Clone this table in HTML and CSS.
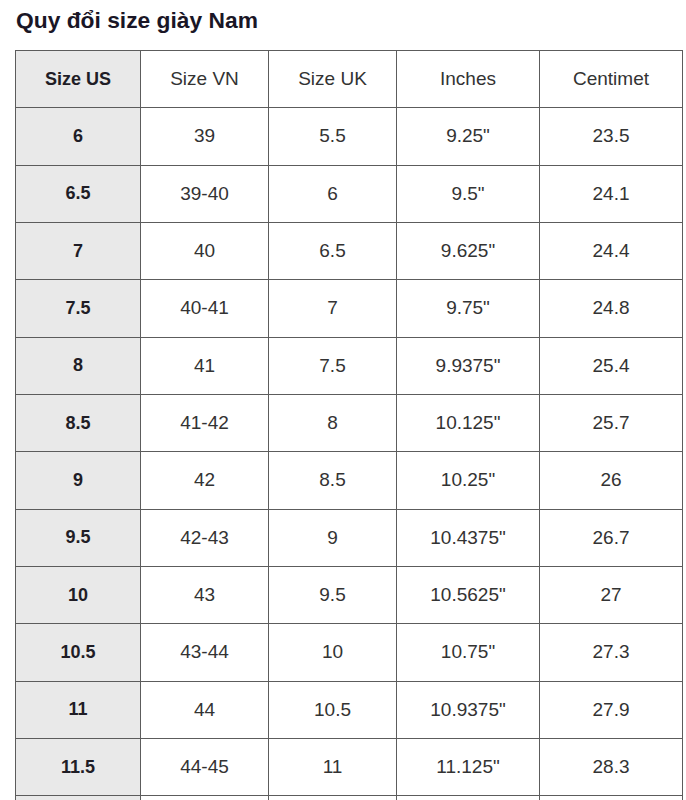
FILE: index.html
```html
<!DOCTYPE html>
<html lang="vi">
<head>
<meta charset="utf-8">
<title>Quy đổi size giày Nam</title>
<link rel="stylesheet" href="styles.css">
</head>
<body>
<div class="page">
  <h2 class="title">Quy đổi size giày Nam</h2>
  <table class="size-table">
    <colgroup>
      <col class="c1"><col class="c2"><col class="c3"><col class="c4"><col class="c5">
    </colgroup>
    <thead>
      <tr><th class="us">Size US</th><th>Size VN</th><th>Size UK</th><th>Inches</th><th>Centimet</th></tr>
    </thead>
    <tbody>
      <tr><th class="us">6</th><td>39</td><td>5.5</td><td>9.25"</td><td>23.5</td></tr>
      <tr><th class="us">6.5</th><td>39-40</td><td>6</td><td>9.5"</td><td>24.1</td></tr>
      <tr><th class="us">7</th><td>40</td><td>6.5</td><td>9.625"</td><td>24.4</td></tr>
      <tr><th class="us">7.5</th><td>40-41</td><td>7</td><td>9.75"</td><td>24.8</td></tr>
      <tr><th class="us">8</th><td>41</td><td>7.5</td><td>9.9375"</td><td>25.4</td></tr>
      <tr><th class="us">8.5</th><td>41-42</td><td>8</td><td>10.125"</td><td>25.7</td></tr>
      <tr><th class="us">9</th><td>42</td><td>8.5</td><td>10.25"</td><td>26</td></tr>
      <tr><th class="us">9.5</th><td>42-43</td><td>9</td><td>10.4375"</td><td>26.7</td></tr>
      <tr><th class="us">10</th><td>43</td><td>9.5</td><td>10.5625"</td><td>27</td></tr>
      <tr><th class="us">10.5</th><td>43-44</td><td>10</td><td>10.75"</td><td>27.3</td></tr>
      <tr><th class="us">11</th><td>44</td><td>10.5</td><td>10.9375"</td><td>27.9</td></tr>
      <tr><th class="us">11.5</th><td>44-45</td><td>11</td><td>11.125"</td><td>28.3</td></tr>
      <tr class="cut"><th class="us"></th><td></td><td></td><td></td><td></td></tr>
    </tbody>
  </table>
</div>
</body>
</html>
```

FILE: styles.css
```css
html, body {
  margin: 0;
  padding: 0;
  background: #ffffff;
}

.page {
  padding: 7px 0 0 16px;
  font-family: "Liberation Sans", Arial, sans-serif;
  color: #333333;
}

.title {
  margin: 0 0 17px 0;
  font-size: 22.8px;
  line-height: 26px;
  font-weight: bold;
  color: #1a1626;
}

.size-table {
  border-collapse: collapse;
  table-layout: fixed;
  width: 667px;
  margin-left: -1px;
}

.c1 { width: 125px; }
.c2 { width: 128px; }
.c3 { width: 128px; }
.c4 { width: 143px; }
.c5 { width: 143px; }

.size-table tr {
  height: 57.33px;
}

.size-table th,
.size-table td {
  border: 1px solid #5c5c5c;
  text-align: center;
  vertical-align: middle;
  padding: 0;
  font-size: 19px;
  color: #333333;
  font-weight: normal;
}

.size-table th.us {
  background: #e9e9e9;
  font-weight: bold;
  font-size: 18px;
  color: #1f1d26;
}
```
